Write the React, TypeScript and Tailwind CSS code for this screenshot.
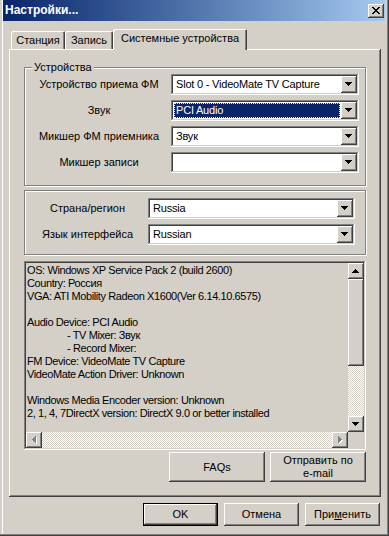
import type { ReactNode } from "react";

const raised =
  "shadow-[inset_-1px_-1px_#404040,inset_1px_1px_#ffffff,inset_-2px_-2px_#808080,inset_2px_2px_#d4d0c8]";
const sunken =
  "shadow-[inset_-1px_-1px_#ffffff,inset_1px_1px_#808080,inset_-2px_-2px_#d4d0c8,inset_2px_2px_#404040]";
const etched = "border border-[#808080] shadow-[inset_1px_1px_#ffffff,1px_1px_#ffffff]";
const dither =
  "bg-[image:repeating-conic-gradient(#ffffff_0_25%,#d4d0c8_0_50%)] bg-[length:2px_2px]";

type Arrow = "up" | "down" | "left" | "right";

function ArrowGlyph({ dir, disabled }: { dir: Arrow; disabled?: boolean }) {
  const vertical = dir === "up" || dir === "down";
  const paths: Record<Arrow, string> = {
    down: "M0 0h7v1H0z M1 1h5v1H1z M2 2h3v1H2z M3 3h1v1H3z",
    up: "M3 0h1v1H3z M2 1h3v1H2z M1 2h5v1H1z M0 3h7v1H0z",
    left: "M3 0h1v7H3z M2 1h1v5H2z M1 2h1v3H1z M0 3h1v1H0z",
    right: "M0 0h1v7H0z M1 1h1v5H1z M2 2h1v3H2z M3 3h1v1H3z",
  };

  return (
    <svg
      width={vertical ? 8 : 5}
      height={vertical ? 5 : 8}
      viewBox={vertical ? "0 0 8 5" : "0 0 5 8"}
      shapeRendering="crispEdges"
    >
      {disabled && <path d={paths[dir]} fill="#ffffff" transform="translate(1 1)" />}
      <path d={paths[dir]} fill={disabled ? "#808080" : "#000000"} />
    </svg>
  );
}

function ScrollButton({ dir, disabled }: { dir: Arrow; disabled?: boolean }) {
  return (
    <div className={`flex h-[16px] w-[16px] shrink-0 items-center justify-center bg-[#d4d0c8] ${raised}`}>
      <ArrowGlyph dir={dir} disabled={disabled} />
    </div>
  );
}

function Combo({ value, width, selected }: { value?: string; width: string; selected?: boolean }) {
  return (
    <div className={`flex h-[21px] ${width} shrink-0 bg-white p-[2px] tracking-[-0.2px] ${sunken}`}>
      <div className="flex min-w-0 flex-1 p-[1px]">
        {selected ? (
          <div className="flex flex-1 items-center border border-dotted border-[#f0f0b0] bg-[#0a246a] pl-[1px] text-white">
            {value}
          </div>
        ) : (
          <div className="flex flex-1 items-center pl-[2px]">{value}</div>
        )}
      </div>
      <div className={`flex h-[17px] w-[16px] shrink-0 items-center justify-center bg-[#d4d0c8] ${raised}`}>
        <ArrowGlyph dir="down" />
      </div>
    </div>
  );
}

function Row({ label, labelWidth, children }: { label: string; labelWidth: string; children: ReactNode }) {
  return (
    <div className="flex h-[21px] items-center gap-[3px]">
      <div className={`${labelWidth} shrink-0 text-center`}>{label}</div>
      {children}
    </div>
  );
}

function Tab({ label, width, active }: { label: string; width: string; active?: boolean }) {
  return (
    <div
      className={`flex ${width} shrink-0 items-center justify-center rounded-t-[2px] bg-[#d4d0c8] shadow-[inset_1px_1px_#ffffff,inset_-1px_0_#404040,inset_-2px_0_#808080] ${
        active ? "relative z-10 -mb-px h-[21px] pb-[2px]" : "h-[18px]"
      }`}
    >
      {label}
    </div>
  );
}

function Button({ children, width, isDefault, className = "" }: { children: ReactNode; width: string; isDefault?: boolean; className?: string }) {
  const shadow = isDefault
    ? "shadow-[inset_0_0_0_1px_#000000,inset_-2px_-2px_#404040,inset_2px_2px_#ffffff,inset_-3px_-3px_#808080]"
    : raised;

  return (
    <div className={`flex ${width} shrink-0 items-center justify-center bg-[#d4d0c8] text-center leading-[13px] ${shadow} ${className}`}>
      {children}
    </div>
  );
}

const infoLines: { text: string; indent?: boolean }[] = [
  { text: "OS: Windows XP Service Pack 2 (build 2600)" },
  { text: "Country: Россия" },
  { text: "VGA: ATI Mobility Radeon X1600(Ver 6.14.10.6575)" },
  { text: "" },
  { text: "Audio Device: PCI Audio" },
  { text: "- TV Mixer: Звук", indent: true },
  { text: "- Record Mixer:", indent: true },
  { text: "FM Device: VideoMate TV Capture" },
  { text: "VideoMate Action Driver: Unknown" },
  { text: "" },
  { text: "Windows Media Encoder version: Unknown" },
  { text: "2, 1, 4, 7DirectX version: DirectX 9.0 or better installed" },
];

export default function App() {
  return (
    <div className="relative h-[536px] w-[389px] overflow-hidden bg-[#d4d0c8] pl-[3px] pr-[4px] font-['Liberation_Sans',Arial,sans-serif] text-[11px] leading-[13px] text-black shadow-[inset_-1px_-1px_#404040,inset_-2px_-2px_#808080,inset_2px_0_#d4d0c8,inset_3px_0_#ffffff]">
      {/* title bar */}
      <div className="flex h-[21px] items-center justify-between bg-linear-to-r from-[#0a246a] to-[#a6caf0] pl-[2px] pr-[1px]">
        <span className="text-[12px] font-bold text-white">Настройки...</span>
        <div className={`flex h-[14px] w-[16px] items-center justify-center bg-[#d4d0c8] ${raised}`}>
          <svg width="8" height="7" viewBox="0 0 8 7" shapeRendering="crispEdges">
            <path
              d="M0 0h2v1H0z M6 0h2v1H6z M1 1h2v1H1z M5 1h2v1H5z M2 2h4v1H2z M3 3h2v1H3z M2 4h4v1H2z M1 5h2v1H1z M5 5h2v1H5z M0 6h2v1H0z M6 6h2v1H6z"
              fill="#000000"
            />
          </svg>
        </div>
      </div>

      {/* tabs */}
      <div className="ml-[8px] mt-[8px] flex h-[20px] items-end">
        <Tab label="Станция" width="w-[54px]" />
        <Tab label="Запись" width="w-[48px]" />
        <Tab label="Системные устройства" width="w-[134px]" active />
      </div>

      {/* tab panel */}
      <div className={`ml-[6px] flex h-[448px] w-[372px] flex-col px-[15px] pt-[18px] ${raised}`}>
        <div className={`relative h-[119px] w-[342px] px-[5px] pt-[6px] ${etched}`}>
          <span className="absolute left-[7px] top-[-7px] bg-[#d4d0c8] px-[2px]">Устройства</span>
          <div className="flex flex-col gap-[5px]">
            <Row label="Устройство приема ФМ" labelWidth="w-[138px]">
              <Combo value="Slot 0 - VideoMate TV Capture" width="w-[188px]" />
            </Row>
            <Row label="Звук" labelWidth="w-[138px]">
              <Combo value="PCI Audio" width="w-[188px]" selected />
            </Row>
            <Row label="Микшер ФМ приемника" labelWidth="w-[138px]">
              <Combo value="Звук" width="w-[188px]" />
            </Row>
            <Row label="Микшер записи" labelWidth="w-[138px]">
              <Combo width="w-[188px]" />
            </Row>
          </div>
        </div>

        <div className={`mt-[4px] h-[65px] w-[342px] px-[5px] pt-[7px] ${etched}`}>
          <div className="flex flex-col gap-[5px]">
            <Row label="Страна/регион" labelWidth="w-[115px]">
              <Combo value="Russia" width="w-[207px]" />
            </Row>
            <Row label="Язык интерфейса" labelWidth="w-[115px]">
              <Combo value="Russian" width="w-[207px]" />
            </Row>
          </div>
        </div>

        {/* info box */}
        <div className={`mt-[6px] flex h-[189px] w-[342px] flex-col p-[2px] ${sunken}`}>
          <div className="flex min-h-0 flex-1">
            <div className="min-w-0 flex-1 overflow-hidden whitespace-nowrap pl-[1px] pt-[1px] tracking-[-0.4px]">
              {infoLines.map((line, i) => (
                <div key={i} className={`h-[13px] ${line.indent ? "pl-[40px]" : ""}`}>
                  {line.text}
                </div>
              ))}
            </div>
            <div className="flex w-[16px] flex-col">
              <ScrollButton dir="up" />
              <div className={`h-[87px] bg-[#d4d0c8] ${raised}`} />
              <div className={`flex-1 ${dither}`} />
              <ScrollButton dir="down" />
            </div>
          </div>
          <div className="flex h-[16px]">
            <ScrollButton dir="left" disabled />
            <div className={`flex-1 ${dither}`} />
            <ScrollButton dir="right" disabled />
            <div className="w-[16px] bg-[#d4d0c8]" />
          </div>
        </div>

        <div className="mt-[2px] flex w-[342px] justify-end gap-[5px]">
          <Button width="w-[96px]" className="h-[30px]">
            FAQs
          </Button>
          <Button width="w-[96px]" className="h-[30px]">
            Отправить по
            <br />
            e-mail
          </Button>
        </div>
      </div>

      {/* dialog buttons */}
      <div className="mt-[6px] flex justify-end gap-[6px] pr-[5px]">
        <Button width="w-[75px]" className="h-[23px]" isDefault>
          OK
        </Button>
        <Button width="w-[75px]" className="h-[23px]">
          Отмена
        </Button>
        <Button width="w-[75px]" className="h-[23px]">
          <span>
            При<span className="underline">м</span>енить
          </span>
        </Button>
      </div>
    </div>
  );
}
